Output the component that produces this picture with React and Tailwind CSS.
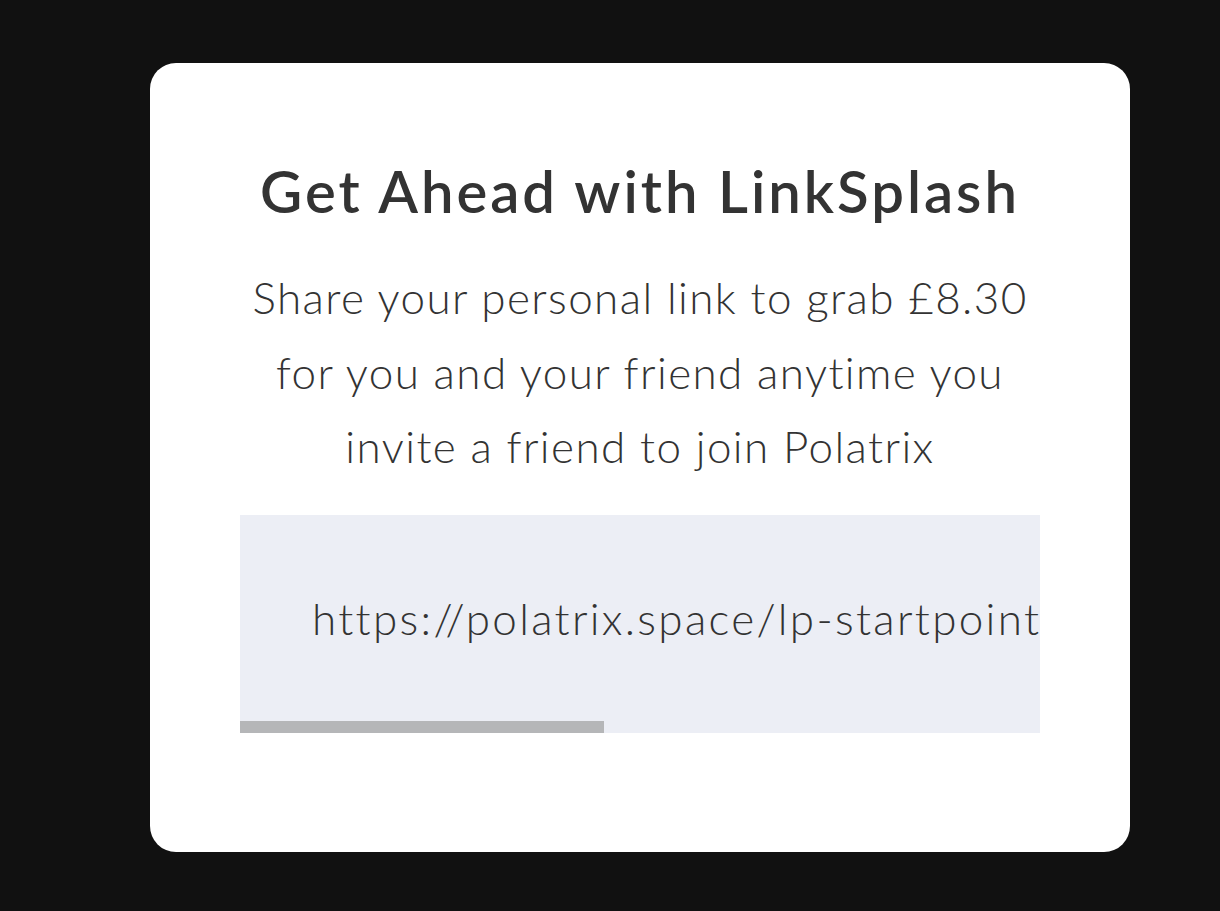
export default function App() {
  const font = { fontFamily: 'Lato, "Open Sans", sans-serif' };
  return (
    <div className="min-h-[911px] w-full bg-[#111111] pt-[63px] pl-[150px]" style={font}>
      <div className="w-[980px] h-[789px] bg-white rounded-[26px] pt-[93px] px-[90px] flex flex-col items-center text-[#333333]">
        <h1 className="h-[70px] leading-[70px] text-[58px] font-semibold tracking-[3px] whitespace-nowrap">Get Ahead with LinkSplash</h1>
        <p className="mt-[34px] text-center text-[44px] leading-[74.5px] font-light tracking-[1.4px] w-[800px] whitespace-nowrap">
          Share your personal link to grab £8.30<br />for you and your friend anytime you<br />invite a friend to join Polatrix
        </p>
        <div className="mt-[31px] w-[800px] h-[218px] bg-[#eceef5] flex flex-col overflow-hidden">
          <div className="h-[206px] flex items-center pl-[72px]">
            <span className="text-[44px] font-light tracking-[2.3px] whitespace-nowrap">https://polatrix.space/lp-startpoint</span>
          </div>
          <div className="h-[12px] flex">
            <div className="w-[364px] h-full bg-[#b5b6b8]"></div>
          </div>
        </div>
      </div>
    </div>
  );
}
